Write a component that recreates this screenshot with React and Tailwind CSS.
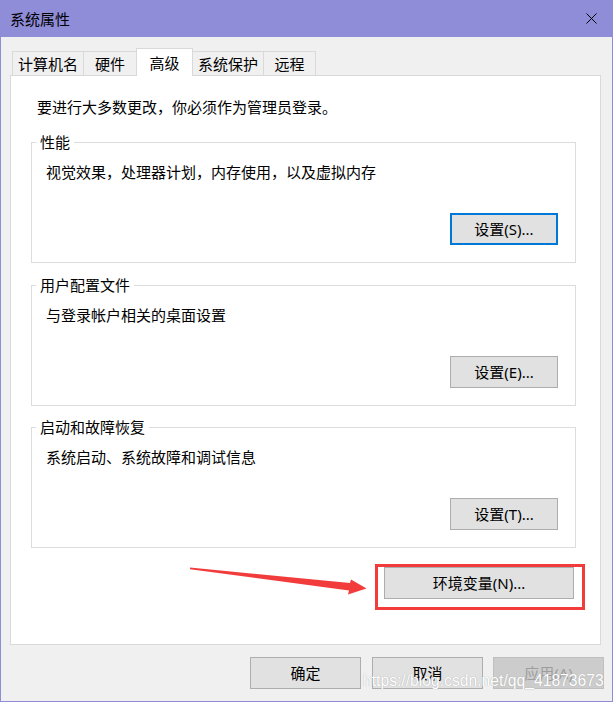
export default function App() {
  return (
    <div className="relative w-[613px] h-[702px] bg-[#f0f0f0] border-x border-b border-[#8f8cd8] font-['Noto_Sans','Noto_Sans_CJK_SC',sans-serif] text-[15px] leading-[20px] text-black overflow-hidden">
      {/* Title bar */}
      <div className="h-[37px] bg-[#8f8cd8] flex items-center justify-between pl-[9px] pr-[15px]">
        <span>系统属性</span>
        <svg width="11" height="11" viewBox="0 0 11 11" className="text-black">
          <path d="M0.5 0.5 L10.5 10.5 M10.5 0.5 L0.5 10.5" stroke="currentColor" strokeWidth="1" fill="none" />
        </svg>
      </div>

      {/* Tabs */}
      <div className="flex items-end h-[38px] pl-[11px]">
        <div className="w-[72px] h-[24px] border border-b-0 border-[#d9d9d9] flex items-center justify-center">计算机名</div>
        <div className="-ml-px w-[54px] h-[24px] border border-b-0 border-[#d9d9d9] flex items-center justify-center">硬件</div>
        <div className="relative z-10 -mb-px -ml-px w-[57px] h-[28px] border border-b-0 border-[#d9d9d9] bg-white flex items-center justify-center">高级</div>
        <div className="w-[71px] h-[24px] border border-b-0 border-l-0 border-[#d9d9d9] flex items-center justify-center">系统保护</div>
        <div className="-ml-px w-[53px] h-[24px] border border-b-0 border-[#d9d9d9] flex items-center justify-center">远程</div>
      </div>

      {/* Panel */}
      <div className="ml-[9px] w-[591px] h-[570px] border border-[#d9d9d9] bg-white">
        <p className="pt-[21px] pl-[26px]">要进行大多数更改，你必须作为管理员登录。</p>

        <Group className="mt-[15px]" title="性能" text="视觉效果，处理器计划，内存使用，以及虚拟内存" button="设置(S)..." focused />
        <Group className="mt-[12px]" title="用户配置文件" text="与登录帐户相关的桌面设置" button="设置(E)..." />
        <Group className="mt-[11px]" title="启动和故障恢复" text="系统启动、系统故障和调试信息" button="设置(T)..." />

        <div className="flex justify-end pr-[26px] mt-[19px]">
          <button className="w-[190px] h-[32px] bg-[#e1e1e1] border border-[#adadad]">环境变量(N)...</button>
        </div>
      </div>

      {/* Dialog buttons */}
      <div className="flex justify-end pr-[8px] mt-[12px]">
        <button className="w-[111px] h-[32px] bg-[#e1e1e1] border border-[#adadad]">确定</button>
        <button className="ml-[11px] w-[111px] h-[32px] bg-[#e1e1e1] border border-[#adadad]">取消</button>
        <button className="ml-[10px] w-[111px] h-[32px] bg-[#cccccc] border border-[#bfbfbf] text-[#9d9d9d]">应用(A)</button>
      </div>

      {/* Annotation: arrow and red box */}
      <svg className="absolute left-[185px] top-[560px]" width="185" height="40" viewBox="185 560 185 40">
        <polygon
          points="189,567.6 349,583 350,579.5 365.5,588.5 347,594.5 348,590.5 189,569.2"
          fill="#f23c3c"
        />
      </svg>
      <div className="absolute left-[374px] top-[564px] w-[210px] h-[46px] border-[3px] border-[#f23c3c]" />

      {/* Watermark */}
      <div className="absolute left-[362px] top-[671px] font-['Liberation_Sans',Arial,sans-serif] text-[15.7px] leading-[20px] text-white [text-shadow:0_0_1px_#9a9a9a]">
        https://blog.csdn.net/qq_41873673
      </div>
    </div>
  )
}

function Group({ className, title, text, button, focused }) {
  return (
    <fieldset className={`${className} ml-[20px] w-[545px] border border-[#dcdcdc] pb-[17px]`}>
      <legend className="ml-[4px] px-[4px]">{title}</legend>
      <p className="mt-[10px] pl-[14px]">{text}</p>
      <div className="flex justify-end pr-[17px] mt-[31px]">
        <button
          className={
            focused
              ? 'w-[108px] h-[32px] bg-[#e1e1e1] border-2 border-[#0078d7]'
              : 'w-[108px] h-[32px] bg-[#e1e1e1] border border-[#adadad]'
          }
        >
          {button}
        </button>
      </div>
    </fieldset>
  )
}
